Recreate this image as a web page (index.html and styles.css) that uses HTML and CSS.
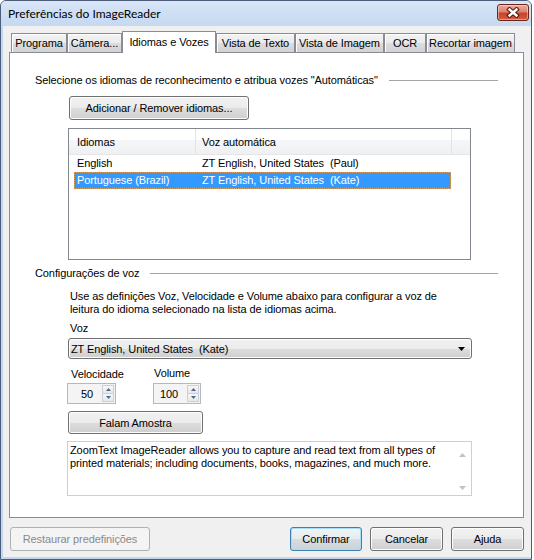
FILE: index.html
```html
<!DOCTYPE html>
<html lang="pt">
<head>
<meta charset="utf-8">
<title>Preferências do ImageReader</title>
<link rel="stylesheet" href="styles.css">
</head>
<body>
<div class="window">
  <div class="titlebar">
    <span class="title">Preferências do ImageReader</span>
    <div class="close-btn">
      <svg width="14" height="11" viewBox="0 0 14 11">
        <path d="M3.5 2.5 L10.5 8.5 M10.5 2.5 L3.5 8.5" stroke="#5a1d12" stroke-width="4.6" stroke-linecap="square" fill="none"/>
        <path d="M3.5 2.5 L10.5 8.5 M10.5 2.5 L3.5 8.5" stroke="#ffffff" stroke-width="2.4" stroke-linecap="square" fill="none"/>
      </svg>
    </div>
  </div>
  <div class="client">
    <div class="tabs">
      <div class="tab w-prog">Programa</div>
      <div class="tab w-cam">Câmera...</div>
      <div class="tab active w-idi">Idiomas e Vozes</div>
      <div class="tab w-vt">Vista de Texto</div>
      <div class="tab w-vi">Vista de Imagem</div>
      <div class="tab w-ocr">OCR</div>
      <div class="tab w-rec">Recortar imagem</div>
    </div>
    <div class="panel">
      <div class="group-head"><span>Selecione os idiomas de reconhecimento e atribua vozes "Automáticas"</span><div class="rule"></div></div>
      <button class="btn btn-add">Adicionar / Remover idiomas...</button>
      <div class="listview">
        <div class="lv-head">
          <div class="lv-col c1">Idiomas</div>
          <div class="lv-col c2">Voz automática</div>
          <div class="lv-col c3"></div>
        </div>
        <div class="lv-row"><span class="c1">English</span><span>ZT English, United States  (Paul)</span></div>
        <div class="lv-row sel"><span class="c1">Portuguese (Brazil)</span><span>ZT English, United States  (Kate)</span></div>
      </div>
      <div class="group-head gh2"><span>Configurações de voz</span><div class="rule"></div></div>
      <div class="voice">
        <p class="voice-desc">Use as definições Voz, Velocidade e Volume abaixo para configurar a voz de<br>leitura do idioma selecionado na lista de idiomas acima.</p>
        <div class="voz-label">Voz</div>
        <div class="combo">
          <span>ZT English, United States  (Kate)</span>
          <svg width="7" height="4" viewBox="0 0 7 4"><path d="M0 0 H7 L3.5 4 Z" fill="#000"/></svg>
        </div>
        <div class="spin-row">
          <div class="spin-col col-vel">
            <div class="spin-label">Velocidade</div>
            <div class="spin w49">
              <span class="spin-val">50</span>
              <div class="spin-btns">
                <div class="spin-b"><svg width="5" height="3" viewBox="0 0 5 3"><path d="M0 3 H5 L2.5 0 Z" fill="#4d6894"/></svg></div>
                <div class="spin-b"><svg width="5" height="3" viewBox="0 0 5 3"><path d="M0 0 H5 L2.5 3 Z" fill="#4d6894"/></svg></div>
              </div>
            </div>
          </div>
          <div class="spin-col col-vol">
            <div class="spin-label">Volume</div>
            <div class="spin w48">
              <span class="spin-val">100</span>
              <div class="spin-btns">
                <div class="spin-b"><svg width="5" height="3" viewBox="0 0 5 3"><path d="M0 3 H5 L2.5 0 Z" fill="#4d6894"/></svg></div>
                <div class="spin-b"><svg width="5" height="3" viewBox="0 0 5 3"><path d="M0 0 H5 L2.5 3 Z" fill="#4d6894"/></svg></div>
              </div>
            </div>
          </div>
        </div>
        <button class="btn btn-sample">Falam Amostra</button>
        <div class="textbox">
          <div class="tb-text">ZoomText ImageReader allows you to capture and read text from all types of<br>printed materials; including documents, books, magazines, and much more.</div>
          <div class="tb-scroll">
            <svg width="7" height="4" viewBox="0 0 7 4"><path d="M0 4 H7 L3.5 0 Z" fill="#c2c2c2"/></svg>
            <svg width="7" height="4" viewBox="0 0 7 4"><path d="M0 0 H7 L3.5 4 Z" fill="#c2c2c2"/></svg>
          </div>
        </div>
      </div>
    </div>
    <div class="footer">
      <button class="btn disabled w-rest">Restaurar predefinições</button>
      <button class="btn default w-conf">Confirmar</button>
      <button class="btn w-canc">Cancelar</button>
      <button class="btn w-aj">Ajuda</button>
    </div>
  </div>
</div>
</body>
</html>
```

FILE: styles.css
```css
html, body {
  margin: 0;
  padding: 0;
  background: #ffffff;
}
body {
  font-family: "Liberation Sans", Arial, sans-serif;
  font-size: 11px;
  letter-spacing: -0.1px;
  color: #000;
}
.window {
  width: 532px;
  height: 560px;
  box-sizing: border-box;
  border: 1px solid #4b5d79;
  border-radius: 6px 6px 0 0;
  background: #c4d7f0;
  display: flex;
  flex-direction: column;
  overflow: hidden;
}
.titlebar {
  height: 25px;
  flex: none;
  display: flex;
  align-items: flex-start;
  background: linear-gradient(#d7e5f7, #c6d9f1);
}
.title {
  font-family: Lato, "Liberation Sans", sans-serif;
  font-size: 12px;
  letter-spacing: 0;
  line-height: 14px;
  margin: 6px 0 0 7px;
  color: #000;
}
.close-btn {
  margin: 3px 2px 0 auto;
  width: 32px;
  height: 17px;
  box-sizing: border-box;
  border: 1px solid #6e2418;
  border-radius: 3px;
  background: linear-gradient(#eba99c 0%, #dc8571 45%, #c8432a 55%, #d45d3f 100%);
  box-shadow: inset 0 0 0 1px rgba(255, 255, 255, 0.4);
  display: flex;
  align-items: center;
  justify-content: center;
}
.client {
  flex: 1;
  margin: 0 0 2px 2px;
  background: #f0f0f0;
  padding-top: 5px;
  display: flex;
  flex-direction: column;
}
.tabs {
  display: flex;
  align-items: flex-end;
  height: 21px;
  margin-left: 8px;
}
.tab {
  box-sizing: border-box;
  height: 19px;
  border: 1px solid #898c95;
  border-bottom: 0;
  background: linear-gradient(#f3f3f3 0%, #ebebeb 50%, #dddddd 51%, #d2d2d2 100%);
  box-shadow: inset 1px 1px 0 #ffffff;
  display: flex;
  align-items: center;
  justify-content: center;
  white-space: nowrap;
  overflow: hidden;
}
.tab.active {
  height: 22px;
  margin-bottom: -1px;
  background: #ffffff;
  box-shadow: none;
  position: relative;
  z-index: 1;
  padding-bottom: 2px;
}
.w-prog { width: 56px; }
.w-cam { width: 55px; }
.w-idi { width: 94px; }
.w-vt { width: 79px; }
.w-vi { width: 89px; }
.w-ocr { width: 42px; }
.w-rec { width: 89px; }

.panel {
  box-sizing: border-box;
  width: 515px;
  height: 466px;
  margin-left: 6px;
  background: #ffffff;
  border: 1px solid #898c95;
  padding: 21px 25px 0 25px;
}
.group-head {
  display: flex;
  align-items: center;
  height: 13px;
  line-height: 13px;
  white-space: nowrap;
}
.group-head .rule {
  flex: 1;
  height: 1px;
  background: #a3a3a3;
  margin-left: 11px;
}
.gh2 {
  margin-top: 7px;
}

.btn {
  display: flex;
  align-items: center;
  justify-content: center;
  box-sizing: border-box;
  padding: 0;
  border: 1px solid #707070;
  border-radius: 3px;
  background: linear-gradient(#f2f2f2 0%, #ebebeb 50%, #dddddd 51%, #cfcfcf 100%);
  box-shadow: inset 0 0 0 1px #fcfcfc;
  font-family: inherit;
  font-size: 11px;
  letter-spacing: -0.1px;
  color: #000;
  white-space: nowrap;
}
.btn.default {
  border-color: #3c7fb1;
  box-shadow: inset 0 0 0 1px #a8def7;
  background: linear-gradient(#f0f4f7 0%, #e7ecf0 50%, #d7dde2 51%, #cbd2d8 100%);
}
.btn.disabled {
  border-color: #adb2b5;
  background: #f4f4f4;
  box-shadow: none;
  color: #8a8a8a;
}
.btn-add {
  margin: 9px 0 0 34px;
  width: 180px;
  height: 24px;
}

.listview {
  margin: 8px 0 0 33px;
  width: 403px;
  height: 132px;
  box-sizing: border-box;
  border: 1px solid #828790;
  background: #ffffff;
}
.lv-head {
  display: flex;
  height: 26px;
  box-sizing: border-box;
  border-bottom: 1px solid #e5e5e5;
  background: linear-gradient(#ffffff 0%, #ffffff 45%, #f5f6f7 46%, #eff0f1 100%);
}
.lv-col {
  display: flex;
  align-items: center;
  box-sizing: border-box;
  border-right: 1px solid #e0e2e5;
  white-space: nowrap;
}
.lv-col.c1 { width: 127px; padding-left: 8px; }
.lv-col.c2 { width: 256px; padding-left: 6px; }
.lv-col.c3 { flex: 1; border-right: 0; }
.lv-row {
  display: flex;
  height: 17px;
  line-height: 17px;
  margin-left: 5px;
  width: 377px;
  padding-left: 3px;
  box-sizing: border-box;
  white-space: pre;
}
.lv-row .c1 { width: 125px; }
.lv-row.sel {
  background: #3399ff;
  color: #ffffff;
  outline: 1px dotted #d9a060;
  outline-offset: -1px;
}

.voice {
  padding-left: 35px;
}
.voice-desc {
  margin: 10px 0 0 0;
  line-height: 13px;
}
.voz-label {
  margin-top: 6px;
  line-height: 13px;
}
.combo {
  margin: 3px 0 0 -2px;
  width: 404px;
  height: 21px;
  box-sizing: border-box;
  border: 1px solid #707070;
  border-radius: 3px;
  background: linear-gradient(#f2f2f2 0%, #ebebeb 50%, #dddddd 51%, #cfcfcf 100%);
  box-shadow: inset 0 0 0 1px #fcfcfc;
  display: flex;
  align-items: center;
  justify-content: space-between;
  padding: 0 6px 0 2px;
  white-space: pre;
}
.spin-row {
  display: flex;
  margin: 8px 0 0 -3px;
}
.spin-col {
  flex: none;
}
.col-vel { width: 86px; }
.spin-label {
  line-height: 13px;
  white-space: nowrap;
}
.col-vel .spin-label { padding: 1px 0 0 4px; }
.col-vel .spin { margin-top: 2px; }
.col-vol .spin-label { padding: 0 0 0 1px; }
.col-vol .spin { margin-top: 3px; }
.spin {
  height: 21px;
  box-sizing: border-box;
  border: 1px solid #b5b8bc;
  background: #f4f4f4;
  display: flex;
  align-items: center;
}
.w49 { width: 49px; }
.w48 { width: 48px; }
.spin-val {
  flex: 1;
  text-align: right;
  padding-right: 9px;
}
.spin-btns {
  width: 12px;
  height: 17px;
  margin-right: 1px;
  display: flex;
  flex-direction: column;
}
.spin-b {
  flex: 1;
  box-sizing: border-box;
  border: 1px solid #c9d0d8;
  background: linear-gradient(#f7f7f7, #e6e8ea);
  display: flex;
  align-items: center;
  justify-content: center;
}
.spin-b + .spin-b {
  border-top: 0;
}
.btn-sample {
  margin: 7px 0 0 -2px;
  width: 135px;
  height: 23px;
}
.textbox {
  margin: 7px 0 0 -3px;
  width: 405px;
  height: 55px;
  box-sizing: border-box;
  border: 1px solid #cfcfcf;
  background: #ffffff;
  display: flex;
}
.tb-text {
  flex: 1;
  padding: 2px 0 0 2px;
  line-height: 13px;
}
.tb-scroll {
  width: 17px;
  display: flex;
  flex-direction: column;
  justify-content: space-between;
  align-items: center;
  padding: 11px 0 5px 0;
}

.footer {
  display: flex;
  gap: 8px;
  margin-top: 9px;
  padding: 0 7px;
}
.footer .btn {
  height: 24px;
}
.w-rest { width: 140px; margin-right: auto; }
.w-conf { width: 72px; }
.w-canc { width: 73px; }
.w-aj { width: 73px; }
```
